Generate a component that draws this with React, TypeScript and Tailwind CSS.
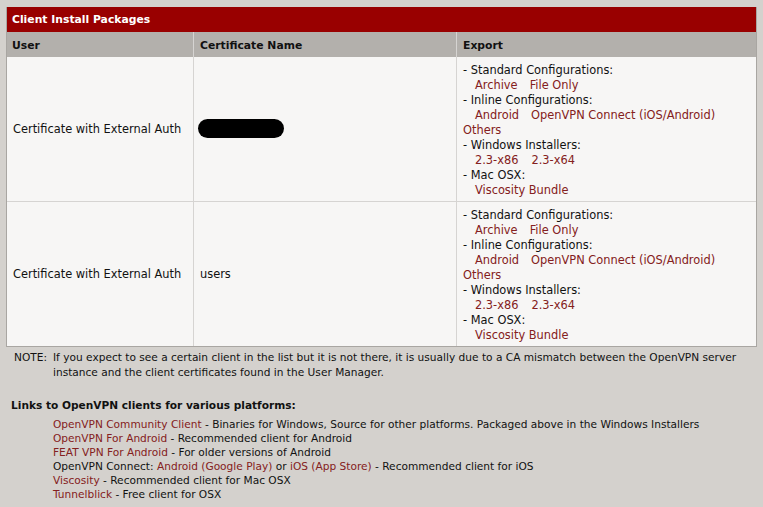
import React from "react";

const font = { fontFamily: '"DejaVu Sans", Verdana, sans-serif' };

function L({ children }: { children: React.ReactNode }) {
  return <span className="text-[#842020]">{children}</span>;
}

function ExportCell() {
  return (
    <div className="px-[6px] pt-[6px] pb-[3px] leading-[15px]">
      <div>- Standard Configurations:</div>
      <div className="pl-[12px]">
        <L>Archive</L>
        <span className="inline-block w-[12px]" />
        <L>File Only</L>
      </div>
      <div>- Inline Configurations:</div>
      <div className="pl-[12px]">
        <L>Android</L>
        <span className="inline-block w-[12px]" />
        <L>OpenVPN Connect (iOS/Android)</L>
      </div>
      <div>
        <L>Others</L>
      </div>
      <div>- Windows Installers:</div>
      <div className="pl-[12px]">
        <L>2.3-x86</L>
        <span className="inline-block w-[13px]" />
        <L>2.3-x64</L>
      </div>
      <div>- Mac OSX:</div>
      <div className="pl-[12px]">
        <L>Viscosity Bundle</L>
      </div>
    </div>
  );
}

function Row({ cert, last }: { cert: React.ReactNode; last?: boolean }) {
  return (
    <div
      className={`grid grid-cols-[187px_263px_1fr] bg-[#f7f6f5] ${
        last ? "" : "border-b border-[#d6d4d2]"
      }`}
    >
      <div className="flex items-center px-[6px] pt-[2px] border-r border-[#d6d4d2]">
        Certificate with External Auth
      </div>
      <div className="flex items-center px-[6px] pt-[2px] border-r border-[#d6d4d2]">{cert}</div>
      <ExportCell />
    </div>
  );
}

export default function App() {
  return (
    <div
      className="w-[763px] h-[507px] bg-[#d4d1cd] text-[#111] overflow-hidden pt-[7px]"
      style={font}
    >
      <div className="mx-[6px] border-x border-b border-[#a9a6a2] text-[11.4px]">
        <div className="h-[25px] bg-[#990000] text-white font-bold text-[10.8px] flex items-center px-[5px] pt-[2px]">
          Client Install Packages
        </div>
        <div className="grid grid-cols-[187px_263px_1fr] h-[25px] bg-[#b3b0ac] font-bold text-[10.8px]">
          <div className="flex items-center px-[5px] pt-[3px] border-r border-[#d6d4d2]">User</div>
          <div className="flex items-center px-[6px] pt-[3px] border-r border-[#d6d4d2]">
            Certificate Name
          </div>
          <div className="flex items-center px-[6px] pt-[3px]">Export</div>
        </div>
        <Row
          cert={
            <span className="inline-block w-[86px] h-[19px] rounded-full bg-black -ml-[2px] -mt-[4px]" />
          }
        />
        <Row cert={<span>users</span>} last />
      </div>

      <div className="text-[10.6px]">
        <div className="flex mt-[3px] leading-[15px]">
          <div className="w-[53px] pl-[14px] shrink-0">NOTE:</div>
          <div className="w-[704px]">
            If you expect to see a certain client in the list but it is not there, it is usually due to
            a CA mismatch between the OpenVPN server instance and the client certificates found in the
            User Manager.
          </div>
        </div>

        <div className="mt-[18px] pl-[11px] font-bold leading-[15px]">
          Links to OpenVPN clients for various platforms:
        </div>

        <div className="mt-[4px] pl-[53px] leading-[14px]">
          <div>
            <L>OpenVPN Community Client</L> - Binaries for Windows, Source for other platforms.
            Packaged above in the Windows Installers
          </div>
          <div>
            <L>OpenVPN For Android</L> - Recommended client for Android
          </div>
          <div>
            <L>FEAT VPN For Android</L> - For older versions of Android
          </div>
          <div>
            OpenVPN Connect: <L>Android (Google Play)</L> or <L>iOS (App Store)</L> - Recommended
            client for iOS
          </div>
          <div>
            <L>Viscosity</L> - Recommended client for Mac OSX
          </div>
          <div>
            <L>Tunnelblick</L> - Free client for OSX
          </div>
        </div>
      </div>
    </div>
  );
}
